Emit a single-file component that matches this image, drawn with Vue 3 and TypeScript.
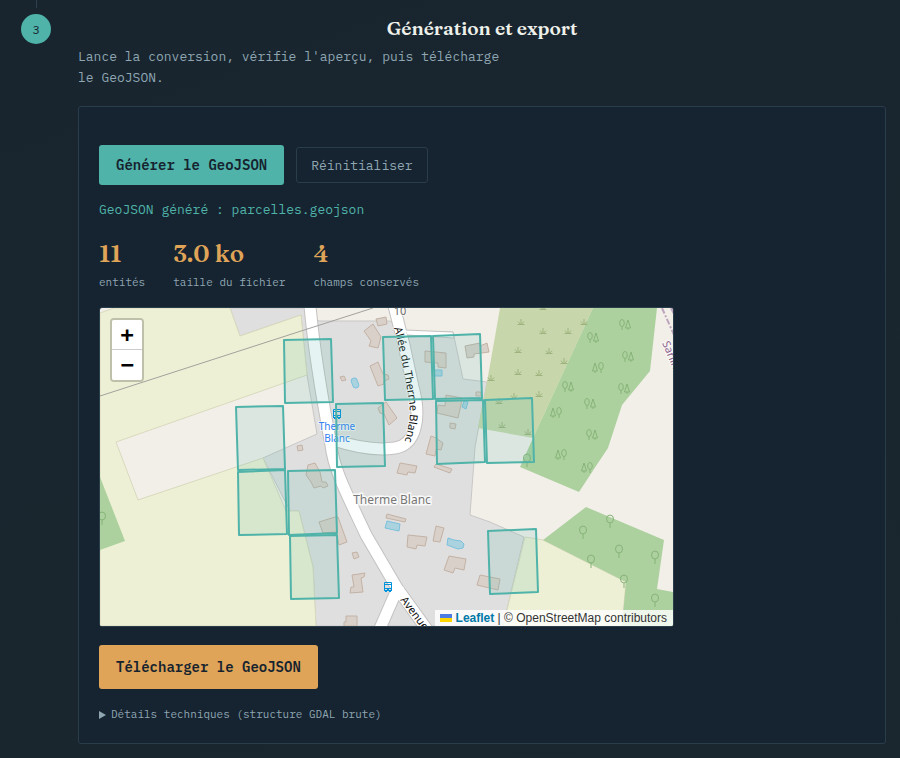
<script setup lang="ts">
type Point = [number, number]

interface Stat {
  value: string
  label: string
}

interface Mark {
  kind: 'pair' | 'pair-flip' | 'tree' | 'scrub'
  at: Point
}

const stats: Stat[] = [
  { value: '11', label: 'entités' },
  { value: '3.0 ko', label: 'taille du fichier' },
  { value: '4', label: 'champs conservés' },
]

const parcels: string[] = [
  '284,340 331,339 333,402 285,403',
  '236,407 283,406 285,469 238,470',
  '238,472 285,470 287,534 239,535',
  '288,471 335,470 337,533 289,535',
  '290,536 337,535 339,598 291,599',
  '336,404 383,403 385,466 337,467',
  '383,337 431,336 433,399 385,400',
  '433,336 480,334 482,398 435,399',
  '436,401 483,400 485,462 437,464',
  '485,400 532,398 534,462 487,463',
  '488,531 536,529 538,592 490,594',
]

const buildings: string[] = [
  '376,319 386,317 387,324 378,326',
  '364,331 373,324 381,337 378,348 369,346 371,341',
  '370,366 378,362 383,374 388,375 389,379 384,381 384,384 378,386',
  '340,377 344,376 346,380 342,381',
  '378,408 386,402 397,418 389,425 384,414 380,413',
  '425,351 446,353 446,368 438,367 438,363 425,362',
  '465,346 480,343 480,346 487,343 489,352 474,354 474,357 467,358',
  '446,395 462,398 461,405 458,418 437,413 438,405 445,406',
  '450,423 456,424 455,429 450,428',
  '476,392 481,392 481,396 476,396',
  '431,436 436,438 443,443 441,450 436,449 435,456 426,454',
  '400,463 417,466 415,473 408,472 407,475 397,473',
  '436,464 452,469 450,473 434,467',
  '297,446 302,445 303,450 298,451',
  '308,465 315,463 320,472 322,482 326,482 328,486 323,488 321,486 314,488 311,482 306,475',
  '319,522 335,517 338,517 347,542 339,545 336,532 323,533',
  '387,514 406,519 405,522 386,518',
  '408,535 427,537 425,546 417,545 416,549 407,547',
  '436,526 444,528 440,542 433,541',
  '449,556 466,559 464,570 455,568 453,573 444,570',
  '352,553 357,552 359,557 354,559',
  '352,575 365,573 364,577 361,578 363,592 350,593 351,587 354,587',
  '346,616 357,616 357,626 344,626 344,622 346,622',
  '480,575 500,579 498,590 477,585',
]

const pools: string[] = [
  '387,521 400,524 399,531 385,528',
  '448,538 454,540 461,541 464,544 463,548 458,549 447,545',
  '435,370 442,370 442,376 434,376',
  '464,401 468,402 466,409 462,407',
]

const marks: Mark[] = [
  { kind: 'pair', at: [625, 325] },
  { kind: 'pair', at: [593, 338] },
  { kind: 'pair', at: [628, 357] },
  { kind: 'pair-flip', at: [598, 368] },
  { kind: 'pair', at: [568, 387] },
  { kind: 'pair', at: [624, 389] },
  { kind: 'pair', at: [590, 404] },
  { kind: 'pair-flip', at: [556, 413] },
  { kind: 'pair', at: [592, 435] },
  { kind: 'pair-flip', at: [561, 455] },
  { kind: 'pair-flip', at: [587, 468] },
  { kind: 'tree', at: [527, 460] },
  { kind: 'tree', at: [583, 532] },
  { kind: 'tree', at: [610, 521] },
  { kind: 'tree', at: [619, 551] },
  { kind: 'tree', at: [591, 561] },
  { kind: 'tree', at: [655, 557] },
  { kind: 'tree', at: [624, 581] },
  { kind: 'tree', at: [655, 600] },
  { kind: 'tree', at: [102, 518] },
  { kind: 'scrub', at: [543, 308] },
  { kind: 'scrub', at: [521, 323] },
  { kind: 'scrub', at: [543, 332] },
  { kind: 'scrub', at: [568, 332] },
  { kind: 'scrub', at: [584, 323] },
  { kind: 'scrub', at: [518, 351] },
  { kind: 'scrub', at: [549, 352] },
  { kind: 'scrub', at: [564, 362] },
  { kind: 'scrub', at: [518, 373] },
  { kind: 'scrub', at: [539, 374] },
  { kind: 'scrub', at: [491, 379] },
  { kind: 'scrub', at: [539, 395] },
  { kind: 'scrub', at: [514, 397] },
  { kind: 'scrub', at: [499, 402] },
  { kind: 'scrub', at: [502, 426] },
  { kind: 'scrub', at: [528, 433] },
]

const stops: Point[] = [
  [337, 414],
  [388, 587],
]
</script>

<template>
  <main class="page">
    <section class="step">
      <div class="rail">
        <span class="connector"></span>
        <span class="badge">3</span>
      </div>
      <div class="body">
        <h2 class="title">Génération et export</h2>
        <p class="intro">Lance la conversion, vérifie l'aperçu, puis télécharge le GeoJSON.</p>

        <div class="card">
          <div class="actions">
            <button type="button" class="btn primary">Générer le GeoJSON</button>
            <button type="button" class="btn ghost">Réinitialiser</button>
          </div>
          <p class="status">GeoJSON généré : parcelles.geojson</p>

          <dl class="stats">
            <div v-for="stat in stats" :key="stat.label" class="stat">
              <dt>{{ stat.label }}</dt>
              <dd>{{ stat.value }}</dd>
            </div>
          </dl>

          <div class="map">
            <svg class="tiles" viewBox="100 308 573 318" preserveAspectRatio="xMidYMid slice" role="img" aria-label="Therme Blanc">
              <defs>
                <g id="mark-tree" fill="none" stroke="#86b378">
                  <ellipse cx="0" cy="-2" rx="3.500" ry="4" />
                  <path d="M0 2V7" />
                </g>
                <g id="mark-pair" fill="none" stroke="#86b378">
                  <ellipse cx="-3" cy="-2" rx="2.300" ry="3.500" />
                  <path d="M-3 1V5M3 -5L0.500 3H5.500ZM3 3V5" />
                </g>
                <g id="mark-pair-flip" fill="none" stroke="#86b378">
                  <ellipse cx="3" cy="-2" rx="2.300" ry="3.500" />
                  <path d="M3 1V5M-3 -5L-5.500 3H-0.500ZM-3 3V5" />
                </g>
                <g id="mark-scrub" fill="none" stroke="#9fb37f">
                  <path d="M-3.500 1.500H3.500M0 1.500V-4M-0.500 1.500L-3 -1.500M0.500 1.500L3 -1.500" />
                </g>
                <g id="mark-stop">
                  <path fill="#0092da" fill-rule="evenodd" d="M-3 -5H3Q4 -5 4 -4V4H3V5H1V4H-1V5H-3V4H-4V-4Q-4 -5 -3 -5ZM-3 -4V-3H3V-4ZM-3 -2V1H3V-2ZM-3 2V3H-1V2ZM1 2V3H3V2Z" />
                </g>
                <path id="line-allee" d="M394 328C400 350 405 375 408 395C412 415 409 425 404 444" />
                <path id="line-avenue" d="M400 600L445 660" />
                <path id="line-limit" d="M662 343L692 413" />
              </defs>

              <rect x="100" y="308" width="573" height="318" fill="#f2efe9" />
              <path class="residential" d="M230 308H305L319 321H390L401 331L453 332L463 379L487 382L475 447L470 515L490 522L524 537L503 626H316L313 567L299 511H290L263 458L317 434L307 375L301 315L240 336Z" />
              <path fill="#f2efe9" d="M317 308H389L392 320H319Z" />
              <path class="farmland" d="M100 313L114 308H230L240 336L301 315L307 375L116 442L138 500L263 458L286 511H299L313 567L316 626H100Z" />
              <path class="farmland" d="M525 537L543 540L626 582L622 626H503Z" />
              <path fill="#c8d7ab" d="M500 308H593L533 438L478 428L487 382Z" />
              <path fill="#add19e" d="M593 308H657L650 371L622 405L608 448L596 466L579 492L520 467L533 438Z" />
              <path fill="#add19e" d="M586 507L664 540L657 589L673 592V626H622L626 582L543 540Z" />
              <path fill="#add19e" d="M100 477L125 541L100 550Z" />

              <use v-for="(mark, i) in marks" :key="`mark-${i}`" :href="`#mark-${mark.kind}`" :x="mark.at[0]" :y="mark.at[1]" />

              <path class="casing" d="M310 306C314 350 323 403 331 445C334 472 350 500 366 535L397 588L431 635M399 585L378 633" />
              <path class="casing" d="M394 306L404 345L413 387C422 420 415 445 395 448C374 451 352 446 334 440" />
              <path fill="#fff" stroke="#c4c2c0" d="M405 330L453 332L454 338L407 335Z" />
              <path class="road" d="M310 306C314 350 323 403 331 445C334 472 350 500 366 535L397 588L431 635M399 585L378 633" />
              <path class="road" d="M394 306L404 345L413 387C422 420 415 445 395 448C374 451 352 446 334 440" />

              <polygon v-for="shape in buildings" :key="shape" class="building" :points="shape" />
              <polygon v-for="shape in pools" :key="shape" class="pool" :points="shape" />
              <rect class="pool" x="352" y="378" width="6" height="10" rx="3" transform="rotate(-20 355 383)" />
              <path d="M100 396L298 332L373 308" fill="none" stroke="#a3a19d" />
              <path d="M662 308L674 335M671 308L674 314" fill="none" stroke="#bda6bd" stroke-width="2" stroke-dasharray="6 2 2 2" />

              <use v-for="(stop, i) in stops" :key="`stop-${i}`" href="#mark-stop" :x="stop[0]" :y="stop[1]" />

              <text class="label street"><textPath href="#line-allee">Allée du Therme Blanc</textPath></text>
              <text class="label street"><textPath href="#line-avenue">Avenue</textPath></text>
              <text class="label limit"><textPath href="#line-limit">Sarlin</textPath></text>
              <text class="label number" x="400" y="315">10</text>
              <text class="label transit" x="337" y="430">Therme</text>
              <text class="label transit" x="337" y="442">Blanc</text>
              <text class="label place" x="392" y="504">Therme Blanc</text>

              <polygon v-for="shape in parcels" :key="shape" class="parcel" :points="shape" />
            </svg>

            <div class="zoom">
              <button type="button" aria-label="Zoom avant">+</button>
              <button type="button" aria-label="Zoom arrière">−</button>
            </div>
            <div class="credit">
              <a href="#leaflet">
                <svg class="flag" viewBox="0 0 12 8" width="12" height="8" aria-hidden="true">
                  <path fill="#4c7be1" d="M0 0h12v4H0z" />
                  <path fill="#ffd500" d="M0 4h12v4H0z" />
                </svg>
                Leaflet</a>
              | © OpenStreetMap contributors
            </div>
          </div>

          <button type="button" class="btn download">Télécharger le GeoJSON</button>

          <details class="tech">
            <summary>Détails techniques (structure GDAL brute)</summary>
          </details>
        </div>
      </div>
    </section>
  </main>
</template>

<style>
body {
  margin: 0;
  background: #18252f;
}
</style>

<style scoped>
.page {
  box-sizing: border-box;
  min-height: 100vh;
  padding: 0 14px 14px 21px;
  background: linear-gradient(160deg, #18252f, #1b272e);
  color: #8fa6b2;
  font-family: "IBM Plex Mono", "Liberation Mono", monospace;
  font-size: 13px;
  line-height: 21px;
}

.step {
  display: grid;
  grid-template-columns: 30px minmax(0, 1fr);
  column-gap: 27px;
}

.rail {
  display: flex;
  flex-direction: column;
  align-items: center;
  gap: 6px;
}

.connector {
  width: 1px;
  height: 8px;
  background: #2d404e;
}

.badge {
  display: grid;
  place-items: center;
  width: 30px;
  height: 30px;
  border-radius: 50%;
  background: #4fb3a9;
  color: #16232f;
  font-size: 12px;
}

.body {
  padding-top: 14px;
}

.title {
  margin: 0 0 4px;
  color: #eef0ea;
  font-family: Fraunces, "Liberation Serif", serif;
  font-size: 19px;
  font-weight: 600;
  line-height: 28px;
  text-align: center;
}

.intro {
  max-width: 440px;
  margin: 0 0 18px;
}

.card {
  padding: 38px 20px 18px;
  border: 1px solid #2a3d4b;
  border-radius: 3px;
  background: #162330;
}

.actions {
  display: flex;
  align-items: center;
  gap: 12px;
}

.btn {
  padding: 0 17px;
  border: 0;
  border-radius: 3px;
  color: #16232f;
  font-family: inherit;
  font-size: 14px;
  font-weight: 600;
  cursor: pointer;
}

.primary {
  height: 40px;
  background: #4fb3a9;
}

.ghost {
  height: 36px;
  padding: 0 14px;
  border: 1px solid #2a3d4b;
  background: transparent;
  color: #8fa6b2;
  font-size: 13px;
  font-weight: 400;
}

.status {
  margin: 14px 0 15px;
  color: #4fb3a9;
}

.stats {
  display: flex;
  flex-wrap: wrap;
  gap: 28px;
  margin: 0 0 16px;
}

.stat {
  display: flex;
  flex-direction: column-reverse;
}

.stat dt {
  font-size: 11px;
  line-height: 18px;
}

.stat dd {
  margin: 0;
  color: #dfa458;
  font-family: Fraunces, "Liberation Serif", serif;
  font-size: 24px;
  font-weight: 600;
  line-height: 38px;
}

.map {
  position: relative;
  box-sizing: border-box;
  max-width: 575px;
  height: 320px;
  margin-bottom: 18px;
  overflow: hidden;
  border: 1px solid #2a3d4b;
  border-radius: 3px;
}

.tiles {
  display: block;
  width: 100%;
  height: 100%;
}

.residential {
  fill: #e0dfdf;
  stroke: #c9c7c6;
}

.farmland {
  fill: #eef0d5;
  stroke: #d8d9bd;
}

.casing {
  fill: none;
  stroke: #c4c2c0;
  stroke-width: 13;
}

.road {
  fill: none;
  stroke: #fff;
  stroke-width: 11;
}

.building {
  fill: #d9d0c9;
  stroke: #c3b2a5;
}

.pool {
  fill: #aad3df;
  stroke: #7cc1dc;
}

.parcel {
  fill: #4fb3a9;
  fill-opacity: 0.15;
  stroke: #4fb3a9;
  stroke-width: 2;
  stroke-linejoin: round;
}

.label {
  font-family: "Noto Sans", sans-serif;
  font-size: 11px;
  paint-order: stroke;
  stroke: rgba(255, 255, 255, 0.6);
  stroke-width: 2;
}

.street {
  fill: #111;
}

.limit {
  fill: #8d618b;
}

.number {
  fill: #6b6b6b;
  text-anchor: middle;
}

.transit {
  fill: #2f80f0;
  font-size: 10px;
  text-anchor: middle;
}

.place {
  fill: #777;
  font-size: 12px;
  stroke: rgba(255, 255, 255, 0.8);
  stroke-width: 3;
  text-anchor: middle;
}

.zoom {
  position: absolute;
  top: 10px;
  left: 10px;
  display: grid;
  border: 2px solid rgba(0, 0, 0, 0.2);
  border-radius: 4px;
  background-clip: padding-box;
}

.zoom button {
  box-sizing: border-box;
  width: 30px;
  height: 30px;
  padding: 0;
  border: 0;
  border-radius: 0 0 2px 2px;
  background: #fff;
  color: #000;
  font-family: "DejaVu Sans Mono", monospace;
  font-size: 22px;
  font-weight: 700;
  line-height: 30px;
  cursor: pointer;
}

.zoom button:first-child {
  border-bottom: 1px solid #ccc;
  border-radius: 2px 2px 0 0;
}

.credit {
  position: absolute;
  right: 0;
  bottom: 0;
  padding: 0 6px 0 5px;
  background: rgba(255, 255, 255, 0.8);
  color: #333;
  font-family: "Liberation Sans", sans-serif;
  font-size: 12px;
  line-height: 16px;
}

.credit a {
  color: #0078a8;
  font-weight: 700;
  text-decoration: none;
}

.download {
  display: block;
  height: 44px;
  margin-bottom: 15px;
  background: #dfa458;
}

.tech summary {
  display: flex;
  align-items: center;
  gap: 5px;
  font-size: 11px;
  list-style: none;
  cursor: pointer;
}

.tech summary::before {
  content: "";
  border-style: solid;
  border-width: 4px 0 4px 7px;
  border-color: transparent transparent transparent currentColor;
}
</style>
